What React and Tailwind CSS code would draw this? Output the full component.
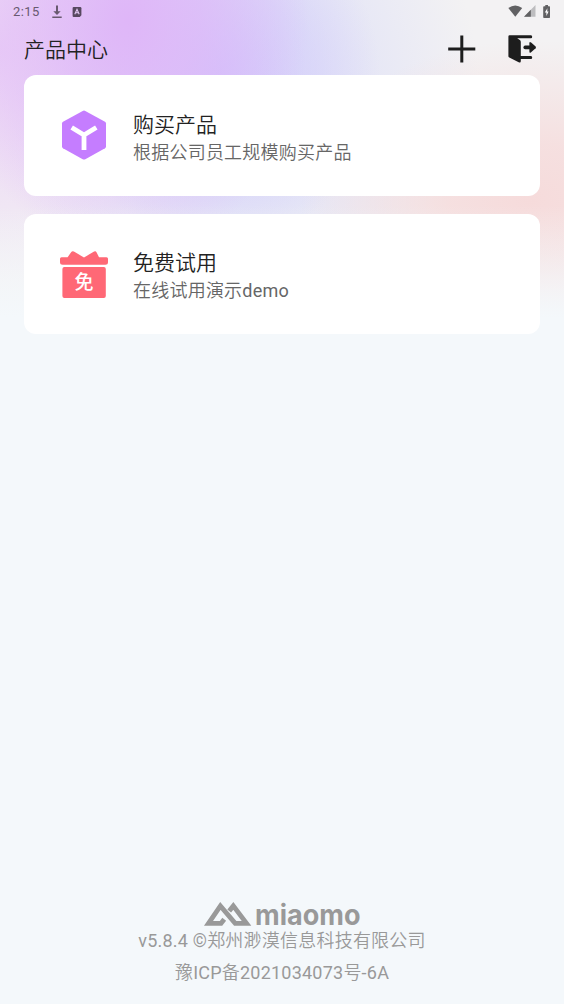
const products = [
    {
        title: '购买产品',
        desc: '根据公司员工规模购买产品',
        icon: <HexIcon/>,
    },
    {
        title: '免费试用',
        desc: <>在线试用演示<span className="font-normal">demo</span></>,
        icon: <GiftIcon/>,
    },
]

function HexIcon() {
    return (
        <svg width="60" height="60" viewBox="0 0 60 60" className="shrink-0">
            <path
                d="M28.7 5.9Q30 5.2 31.3 5.9L51 16.8Q52 17.4 52 18.6V41.4Q52 42.6 51 43.2L31.3 54.2Q30 54.9 28.7 54.2L9 43.2Q8 42.6 8 41.4V18.6Q8 17.4 9 16.8Z"
                fill="#c57dff"
            />
            <path d="M17.7 22.5L30 30L42.3 22.5M30 28V45" stroke="#fff" strokeWidth="4.8" fill="none"/>
        </svg>
    )
}

function GiftIcon() {
    return (
        <svg width="60" height="60" viewBox="0 -2 60 60" className="shrink-0">
            <path
                d="M7.5 11.2H13.6L17.3 6Q18.3 4.7 19.9 5.6L30 11.4L40.1 5.6Q41.7 4.7 42.5 6.2L45 11.2H52.5Q54 11.2 54 12.7V16.2Q54 18.7 51.3 18.7H8.7Q6 18.7 6 16.2V12.7Q6 11.2 7.5 11.2Z"
                fill="#ff6876"
            />
            <rect x="8.4" y="20.9" width="43.4" height="31.2" rx="2" fill="#ff6876"/>
            <text x="30" y="43.2" textAnchor="middle" fontSize="19" fontWeight="500" fill="#fff" fontFamily="Noto Sans CJK SC, sans-serif">免</text>
        </svg>
    )
}

const StatusBar = () => {
    return (
        <div className="flex h-6 items-center justify-between pl-[13px] pr-[13px]">
            <div className="flex items-center">
                <span className="w-[27px] text-[13px] leading-6 tracking-[0.4px] text-[#68596f]">2:15</span>
                <svg width="10" height="14" viewBox="0 0 10 14" className="ml-[12px]">
                    <path d="M4 0.5H6V6.3H8.7L5 10L1.3 6.3H4ZM.3 11.6H9.7V13H.3Z" fill="#68596f"/>
                </svg>
                <svg width="10" height="12" viewBox="0 0 10 12" className="ml-[10px]">
                    <path d="M1.6 1H8.2Q9.4 1 9.4 2.2V9.3L7.8 11H1.6Q.6 11 .6 10V2Q.6 1 1.6 1Z" fill="#574860"/>
                    <path d="M2.8 8.3L5 3.3L7.2 8.3M3.7 6.8H6.3" stroke="#e3caf5" strokeWidth="1.1" fill="none"/>
                </svg>
            </div>
            <div className="flex items-center pb-[2px]">
                <svg width="15" height="12" viewBox="0 0 15 12">
                    <path d="M.3 3Q7.2-2.2 14.2 3L7.3 11.7Z" fill="#616163"/>
                </svg>
                <svg width="12" height="12" viewBox="0 0 12 12" className="ml-px">
                    <path d="M11.5 0V11.7H0Z" fill="#bdbdbf"/>
                    <path d="M6.8 4.8V11.7H0Z" fill="#616163"/>
                </svg>
                <svg width="8" height="13" viewBox="0 0 8 13" className="ml-[7px]">
                    <path d="M2.3 0H5V1.3H6.4Q7 1.3 7 2V12.2Q7 13 6.3 13H1Q.2 13 .2 12.2V2Q.2 1.3 1 1.3H2.3Z" fill="#616163"/>
                    <path d="M4.4 3.3L1.8 7.6H3.4V11L5.6 6.4H4.2Z" fill="#fff"/>
                </svg>
            </div>
        </div>
    )
}

const Header = () => {
    return (
        <header className="flex h-[51px] items-center justify-between pl-6 pr-[27px]">
            <h1 className="pt-px text-[21px] font-[350] leading-[30px] text-[#222]">产品中心</h1>
            <div className="flex items-center gap-8 pb-[2px]">
                <button aria-label="添加">
                    <svg width="28" height="28" viewBox="0 0 28 28">
                        <path d="M.2 14H27.3M13.8.5V27.5" stroke="#1d1d1d" strokeWidth="3"/>
                    </svg>
                </button>
                <button aria-label="退出">
                    <svg width="29" height="28" viewBox="0 0 29 28">
                        <path d="M1.6.2H23Q24.2.2 24.2 1.7T23 3.2H9.2L11.8 5Q12.8 5.6 12.8 7V21H23Q24.2 21 24.2 22.5T23 24H12.8V26Q12.8 28.3 10.7 27.2L1.3 22.6Q.4 22.1.4 21.2V1.4Q.4.2 1.6.2Z" fill="#1d1d1d"/>
                        <path d="M17.2 12.4H24" stroke="#1d1d1d" strokeWidth="3.6" strokeLinecap="round"/>
                        <path d="M21.4 8.3Q21.4 6.2 23.1 7.6L27.6 11.6Q28.4 12.4 27.6 13.2L23.1 17.2Q21.4 18.6 21.4 16.5Z" fill="#1d1d1d"/>
                    </svg>
                </button>
            </div>
        </header>
    )
}

const Footer = () => {
    return (
        <footer className="mt-auto flex flex-col items-center pb-[18px] text-[18px] font-[350] tracking-[0.22px] text-[#999]">
            <svg width="157" height="26" viewBox="0 0 157 26" className="overflow-visible">
                <path
                    d="M20.2 17.2L17 21.4H4.5L16.4 3.9L31.2 21.4H42.5L29.3 3.9L25.2 9"
                    fill="none"
                    stroke="#999"
                    strokeWidth="4.8"
                />
                <text x="51" y="23.4" textLength="105.5" lengthAdjust="spacingAndGlyphs" fontFamily="Inter, sans-serif" fontSize="29" fontWeight="700" letterSpacing="0" fill="#999">miaomo</text>
            </svg>
            <p className="h-[26px] leading-[26px]">
                <span className="font-normal">v5.8.4 ©</span>郑州渺漠信息科技有限公司
            </p>
            <p className="mt-[6px] h-[26px] leading-[26px]">
                豫<span className="font-normal">ICP</span>备<span className="font-normal">2021034073</span>号<span className="font-normal">-6A</span>
            </p>
        </footer>
    )
}

const App = () => {
    return (
        <div className="flex h-[1004px] w-full flex-col bg-[#f4f8fb] bg-[linear-gradient(to_bottom,#f4f8fb00_0px,#f4f8fb00_205px,#f4f8fb80_270px,#f4f8fb_318px),radial-gradient(ellipse_180px_240px_at_128px_20px,#dfb6f8_0%,#dfb6f8b0_40%,#dfb6f800_100%),radial-gradient(ellipse_160px_170px_at_220px_75px,#d0c6fb_0%,#d0c6fb90_40%,#d0c6fb00_100%),radial-gradient(ellipse_230px_160px_at_530px_200px,#f6dbdb_0%,#f6dbdbcc_35%,#f6dbdb00_100%),radial-gradient(ellipse_170px_240px_at_0px_50px,#ead0f6_0%,#ead0f600_100%),radial-gradient(ellipse_240px_260px_at_240px_90px,#dddff8_0%,#dddff8cc_35%,#dddff800_100%),linear-gradient(#f3f2f3,#f3f2f3)] bg-[length:100%_320px] bg-no-repeat font-['Roboto','Noto_Sans_CJK_SC',sans-serif]">
            <StatusBar/>
            <Header/>

            <main className="flex flex-col gap-[18px] px-6">
                {products.map((item) => (
                    <div key={item.title} className="flex h-[120.5px] items-center rounded-xl bg-white pl-[30px]">
                        {item.icon}
                        <div className="ml-[19px] pt-[3.5px]">
                            <h2 className="text-[21px] font-[350] leading-[30px] text-[#222]">{item.title}</h2>
                            <p className="text-[18px] font-[350] leading-[25px] tracking-[0.22px] text-[#666]">{item.desc}</p>
                        </div>
                    </div>
                ))}
            </main>

            <Footer/>
        </div>
    )
}

export default App
